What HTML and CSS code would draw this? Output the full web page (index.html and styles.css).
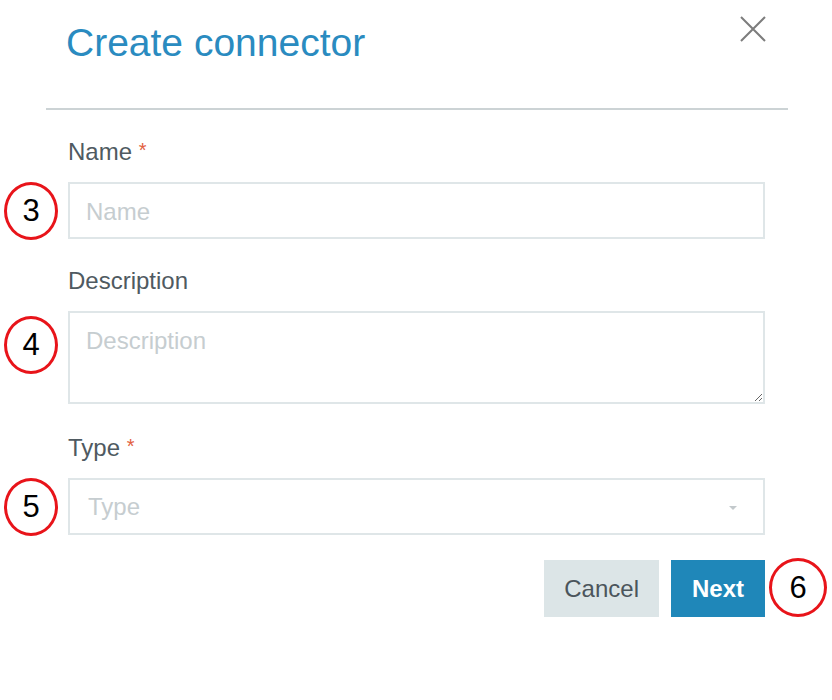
FILE: index.html
```html
<!DOCTYPE html>
<html lang="en">
<head>
  <meta charset="UTF-8" />
  <title>Create connector</title>
  <meta name="viewport" content="width=device-width, initial-scale=1.0" />
<link rel="stylesheet" href="styles.css">
</head>
<body>
  <div class="dialog">
    <div class="header">
      <h1 class="title">Create connector</h1>
      <button class="close-btn" aria-label="Close">
        <svg width="26" height="26" viewBox="0 0 26 26">
          <path d="M1 1 L25 25 M25 1 L1 25" stroke="#7d7d7d" stroke-width="2" fill="none" />
        </svg>
      </button>
    </div>

    <div class="form">
      <div class="field">
        <label class="field-label">Name <span class="req">*</span></label>
        <div class="control">
          <span class="marker">3</span>
          <input class="input" type="text" placeholder="Name" />
        </div>
      </div>

      <div class="field">
        <label class="field-label">Description</label>
        <div class="control">
          <span class="marker marker-low">4</span>
          <textarea class="input textarea" placeholder="Description"></textarea>
        </div>
      </div>

      <div class="field">
        <label class="field-label">Type <span class="req">*</span></label>
        <div class="control">
          <span class="marker">5</span>
          <div class="input select">
            <span class="placeholder">Type</span>
            <span class="caret"></span>
          </div>
        </div>
      </div>

      <div class="actions">
        <button class="btn btn-cancel">Cancel</button>
        <div class="control">
          <button class="btn btn-next">Next</button>
          <span class="marker marker-right">6</span>
        </div>
      </div>
    </div>
  </div>
</body>
</html>
```

FILE: styles.css
```css
body {
  margin: 0;
  font-family: 'Liberation Sans', Arial, sans-serif;
  background: #ffffff;
  color: #4f5a61;
}

.dialog {
  width: 742px;
  margin-left: 46px;
}

.header {
  display: flex;
  justify-content: space-between;
  align-items: flex-start;
  padding: 20px 22px 42px 20px;
  border-bottom: 2px solid #ccd3d5;
}

.title {
  margin: 0;
  font-size: 39px;
  line-height: 46px;
  font-weight: normal;
  color: #2a8bc0;
}

.close-btn {
  margin-top: -4px;
  padding: 0;
  border: none;
  background: none;
  width: 26px;
  height: 26px;
}

.close-btn svg {
  display: block;
}

.form {
  padding: 25px 23px 0 22px;
}

.field {
  margin-bottom: 27px;
}

.field-label {
  display: block;
  font-size: 24px;
  line-height: 30px;
  margin-bottom: 15px;
  color: #4f5a61;
}

.req {
  color: #e2603f;
  font-size: 20px;
  vertical-align: 3px;
}

.control {
  position: relative;
}

.input {
  display: block;
  box-sizing: border-box;
  width: 100%;
  height: 57px;
  margin: 0;
  padding: 13px 16px 10px;
  border: 2px solid #dfe6e8;
  border-radius: 0;
  font-family: inherit;
  font-size: 24px;
  line-height: 30px;
  color: #4f5a61;
  outline: none;
}

.input::placeholder {
  color: #c6cdd0;
}

.textarea {
  height: 93px;
  resize: vertical;
}

.select {
  display: flex;
  justify-content: space-between;
  align-items: center;
  padding: 0 26px 0 18px;
}

.placeholder {
  color: #c6cdd0;
}

.caret {
  width: 0;
  height: 0;
  border-left: 4px solid transparent;
  border-right: 4px solid transparent;
  border-top: 4px solid #c3c9cc;
  margin-top: 2px;
}

.actions {
  display: flex;
  justify-content: flex-end;
  gap: 12px;
  margin-top: -2px;
}

.btn {
  height: 57px;
  padding: 0 20px;
  border: none;
  border-radius: 0;
  font-family: inherit;
  font-size: 24px;
}

.btn-cancel {
  background: #dce5e7;
  color: #4b555c;
}

.btn-next {
  display: block;
  padding: 0 21px;
  background: #1f87b9;
  color: #ffffff;
  font-weight: bold;
}

/* red numbered annotation circles */
.marker {
  position: absolute;
  left: -64px;
  top: 0;
  box-sizing: border-box;
  width: 54px;
  height: 58px;
  border: 3px solid #e8141a;
  border-radius: 50%;
  display: flex;
  align-items: center;
  justify-content: center;
  font-family: 'Liberation Sans', Arial, sans-serif;
  font-size: 31px;
  color: #000000;
  background: #ffffff;
}

.marker-low {
  top: 5px;
}

.marker-right {
  left: auto;
  right: -62px;
  top: -2px;
  width: 58px;
  height: 59px;
}
```
